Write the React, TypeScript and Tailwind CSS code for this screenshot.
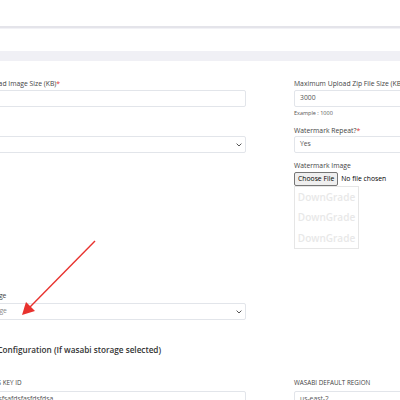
import React from "react";

const font = { fontFamily: '"Open Sans", "Noto Sans", sans-serif' };

function Chevron() {
  return (
    <svg width="6" height="4" viewBox="0 0 6 4" className="shrink-0">
      <path d="M0.6 0.6 L3 3 L5.4 0.6" fill="none" stroke="#555" strokeWidth="1" />
    </svg>
  );
}

function Label({ text, required }: { text: string; required?: boolean }) {
  return (
    <div className="h-[10px] text-[6.8px] leading-[10px] text-[#444] whitespace-nowrap">
      {text}
      {required && <span className="text-[#e3342f]">*</span>}
    </div>
  );
}

function Input({ value }: { value: string }) {
  return (
    <div className="h-[17px] border border-[#e2e5ea] rounded-[2px] flex items-center px-[5px] text-[6.8px] text-[#555] whitespace-nowrap">
      {value}
    </div>
  );
}

function Select({ value, muted }: { value: string; muted?: boolean }) {
  return (
    <div className="h-[17px] border border-[#e2e5ea] rounded-[2px] flex items-center justify-between pl-[5px] pr-[3px] text-[6.8px] whitespace-nowrap">
      <span className={muted ? "text-[#8a8a8a]" : "text-[#555]"}>{value}</span>
      <Chevron />
    </div>
  );
}

export default function App() {
  return (
    <div className="w-[400px] h-[400px] overflow-hidden bg-white relative" style={font}>
      <div className="h-[26px] bg-white" />
      <div className="h-[2px] bg-[#e4e4ea]" />
      <div className="h-[1px] bg-[#f2f2f6]" />
      <div className="h-[22px] bg-white" />
      <div className="h-[10px] bg-[#f0f0f5]" />

      <div className="pt-[18px] -ml-[50px]">
        <div className="flex gap-[48px] items-start">
          <div className="w-[296px] shrink-0">
            <Label text="Maximum Upload Image Size (KB)" required />
            <div className="mt-[1px]">
              <Input value="" />
            </div>
            <div className="mt-[19px] h-[10px]" />
            <Select value="" />
            <div className="mt-[138px]">
              <Label text="Preferred Storage" />
            </div>
            <div className="mt-[2px]">
              <Select value="Select A Storage" muted />
            </div>
          </div>

          <div className="w-[286px] shrink-0">
            <Label text="Maximum Upload Zip File Size (KB)" />
            <div className="mt-[1px]">
              <Input value="3000" />
            </div>
            <div className="mt-[2px] h-[8px] text-[5.5px] leading-[8px] text-[#555]">Example : 1000</div>
            <div className="mt-[9px]">
              <Label text="Watermark Repeat?" required />
            </div>
            <Select value="Yes" />
            <div className="mt-[8px]">
              <Label text="Watermark Image" />
            </div>
            <div className="mt-[1px] h-[14px] flex items-center gap-[3px] text-[6.8px] whitespace-nowrap">
              <div className="h-[14px] px-[3px] flex items-center bg-[#efefef] border border-[#767676] rounded-[2px] text-black">
                Choose File
              </div>
              <span className="text-black">No file chosen</span>
            </div>
            <div className="w-[65px] h-[63px] border border-[#e6e6e6] flex flex-col justify-around items-center text-[10px] font-semibold text-[#e8e8e8] leading-none">
              <span>DownGrade</span>
              <span>DownGrade</span>
              <span>DownGrade</span>
            </div>
          </div>
        </div>

        <div className="mt-[23px] ml-[15px] h-[14px] text-[8.2px] leading-[14px] font-semibold text-[#333] whitespace-nowrap">
          Storage Configuration (If wasabi storage selected)
        </div>

        <div className="mt-[21px] flex gap-[48px] items-start">
          <div className="w-[296px] shrink-0">
            <div className="ml-[4px] h-[10px] text-[6.3px] leading-[10px] text-[#444] uppercase whitespace-nowrap">Wasabi Access Key ID</div>
            <div className="mt-[3px]">
              <Input value="asdfsdfsdfsdfsfsafdsfasfdsfdsa" />
            </div>
          </div>
          <div className="w-[286px] shrink-0">
            <div className="h-[10px] text-[6.3px] leading-[10px] text-[#444] uppercase whitespace-nowrap">Wasabi Default Region</div>
            <div className="mt-[3px]">
              <Input value="us-east-2" />
            </div>
          </div>
        </div>
      </div>

      <svg className="absolute left-0 top-0 pointer-events-none" width="400" height="400">
        <line x1="95" y1="241" x2="30" y2="307" stroke="#e8322e" strokeWidth="1.4" />
        <polygon points="22,315 26,302 35,311" fill="#e8322e" />
      </svg>
    </div>
  );
}
